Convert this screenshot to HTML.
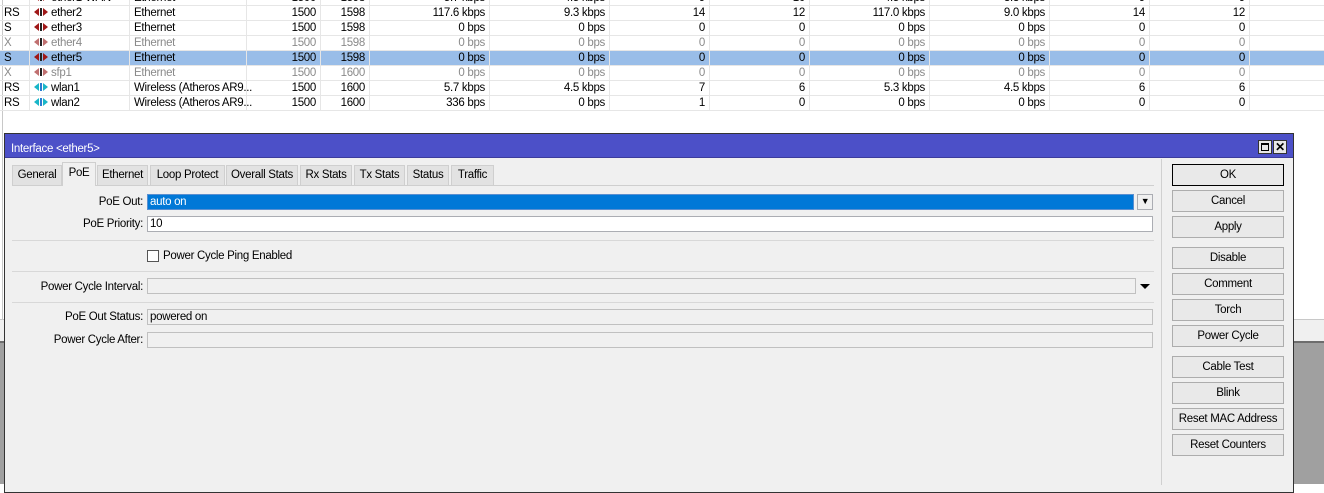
<!DOCTYPE html>
<html><head><meta charset="utf-8"><style>
*{box-sizing:border-box;margin:0;padding:0}
body{width:1324px;height:484px;position:relative;overflow:hidden;background:#fff;font-family:"Liberation Sans",Arial,sans-serif;font-size:11.5px;color:#000;letter-spacing:-0.3px}
.a{position:absolute}
.row{position:absolute;left:0;width:1324px;height:15px;border-bottom:1px solid #e6e6e6}
.row.sel{background:#99bde8}
.row.dis{color:#8a8a8a}
.c{position:absolute;top:0;height:15px;line-height:14px;white-space:nowrap;border-right:1px solid #e6e6e6}
.r{text-align:right;padding-right:4px}
.l{padding-left:4px}
.lab{position:absolute;right:1181px;text-align:right;width:200px;line-height:16px}
.fld{position:absolute;height:16px;border:1px solid #abadb3;background:#fff;line-height:14px;padding-left:2px}
.fld.g{background:#f0f0f0;border-color:#c0c0c0}
.sep{position:absolute;left:12px;width:1142px;height:1px;background:#d8d8d8}
.btn{position:absolute;left:1172px;width:112px;height:22px;border:1px solid #adadad;background:#e9e9e9;text-align:center;line-height:20px}
.tab{position:absolute;top:164px;height:20px;line-height:19px;border:1px solid #cfcfcf;border-bottom:none;background:#e2e2e2;text-align:center}
</style></head><body>
<div class="a" style="left:2px;top:0;width:1px;height:343px;background:#c8c8c8"></div>
<div id="t"></div>
<script>
var cols=[0,30,130,247,321,370,490,610,710,810,930,1050,1150,1250];
var rows=[
["","ether1-WAN","Ethernet","1500","1598","5.7 kbps","4.5 kbps","9","10","4.5 kbps","3.3 kbps","9","9",0],
["RS","ether2","Ethernet","1500","1598","117.6 kbps","9.3 kbps","14","12","117.0 kbps","9.0 kbps","14","12",0],
["S","ether3","Ethernet","1500","1598","0 bps","0 bps","0","0","0 bps","0 bps","0","0",0],
["X","ether4","Ethernet","1500","1598","0 bps","0 bps","0","0","0 bps","0 bps","0","0",2],
["S","ether5","Ethernet","1500","1598","0 bps","0 bps","0","0","0 bps","0 bps","0","0",1],
["X","sfp1","Ethernet","1500","1600","0 bps","0 bps","0","0","0 bps","0 bps","0","0",2],
["RS","wlan1","Wireless (Atheros AR9...","1500","1600","5.7 kbps","4.5 kbps","7","6","5.3 kbps","4.5 kbps","6","6",3],
["RS","wlan2","Wireless (Atheros AR9...","1500","1600","336 bps","0 bps","1","0","0 bps","0 bps","0","0",3]];
var h="";
rows.forEach(function(r,i){
 var y=-9+i*15;var fl=r[13];
 var cls="row"+(fl==1?" sel":"")+(fl==2?" dis":"");
 h+='<div class="'+cls+'" style="top:'+y+'px">';
 for(var k=0;k<13;k++){
  var x=cols[k],w=cols[k+1]-x;
  var al=(k<3)?"l":"r";
  var t=r[k];
  if(k==1){
   var wl=fl==3;
   var col=wl?"#19b6c8":(fl==2?"#c07070":"#a01818");
   t='<svg width="14" height="10" style="vertical-align:-1px;margin-right:3px" viewBox="0 0 14 10"><path d="M0 5L5 1V9Z M14 5L9 1V9Z" fill="'+col+'"/><rect x="6" y="1" width="2" height="8" fill="'+(wl?"#2a7ad0":"#222")+'"/></svg>'+t;
  }
  h+='<div class="c '+al+'" style="left:'+x+'px;width:'+w+'px">'+t+'</div>';
 }
 h+='</div>';
});
document.getElementById('t').innerHTML=h;
</script>
<div class="a" style="left:0;top:319px;width:1324px;height:1px;background:#c8c8c8"></div>
<div class="a" style="left:0;top:320px;width:1324px;height:21px;background:#f0f0f0"></div>
<div class="a" style="left:0;top:341px;width:1324px;height:2px;background:#6d6d6d"></div>
<div class="a" style="left:0;top:343px;width:1324px;height:141px;background:#a0a0a0"></div>
<div class="a" style="left:0;top:1px;width:1324px;height:484px">
<div class="a" style="left:4px;top:132px;width:1290px;height:360px;background:#f0f0f0;border:1px solid #333"></div>
<div class="a" style="left:5px;top:133px;width:1288px;height:24px;background:#4c50c8;border-bottom:1px solid #3c3c9c"></div>
<div class="a" style="left:11px;top:140px;color:#fff;line-height:16px">Interface &lt;ether5&gt;</div>
<div class="a" style="left:1258px;top:139px;width:14px;height:14px;background:#e8e8e8;border:1px solid #333"><div style="margin:2px;width:8px;height:8px;border:1px solid #000;border-top-width:2px"></div></div>
<div class="a" style="left:1273px;top:139px;width:14px;height:14px;background:#e8e8e8;border:1px solid #333;font-weight:bold;font-size:12px;line-height:12px;text-align:center">✕</div>
<div class="a" style="left:1161px;top:158px;width:1px;height:326px;background:#d0d0d0"></div>
<div class="a" style="left:12px;top:184px;width:1142px;height:1px;background:#cfcfcf"></div>
<div class="tab" style="left:12px;width:50px">General</div>
<div class="tab" style="left:62px;top:161px;height:24px;width:34px;background:#f0f0f0;line-height:21px">PoE</div>
<div class="tab" style="left:97px;width:51px">Ethernet</div>
<div class="tab" style="left:150px;width:75px">Loop Protect</div>
<div class="tab" style="left:226px;width:72px">Overall Stats</div>
<div class="tab" style="left:300px;width:52px">Rx Stats</div>
<div class="tab" style="left:354px;width:51px">Tx Stats</div>
<div class="tab" style="left:407px;width:42px">Status</div>
<div class="tab" style="left:451px;width:43px">Traffic</div>
<div class="lab" style="top:193px">PoE Out:</div>
<div class="fld" style="left:147px;top:193px;width:987px;background:#0078d7;border-color:#5a8fd0;color:#fff">auto on</div>
<div class="fld" style="left:1137px;top:193px;width:16px;background:#f0f0f0;font-size:9px;text-align:center;padding:0;line-height:13px">▼</div>
<div class="lab" style="top:215px">PoE Priority:</div>
<div class="fld" style="left:147px;top:215px;width:1006px">10</div>
<div class="sep" style="top:239px"></div>
<div class="a" style="left:147px;top:249px;width:12px;height:12px;border:1px solid #555;background:#fff"></div>
<div class="a" style="left:163px;top:247px;line-height:16px">Power Cycle Ping Enabled</div>
<div class="sep" style="top:270px"></div>
<div class="lab" style="top:278px">Power Cycle Interval:</div>
<div class="fld g" style="left:147px;top:277px;width:989px"></div>
<div class="a" style="left:1140px;top:283px;width:0;height:0;border-left:5px solid transparent;border-right:5px solid transparent;border-top:5px solid #000"></div>
<div class="sep" style="top:301px"></div>
<div class="lab" style="top:308px">PoE Out Status:</div>
<div class="fld g" style="left:147px;top:308px;width:1006px">powered on</div>
<div class="lab" style="top:331px">Power Cycle After:</div>
<div class="fld g" style="left:147px;top:331px;width:1006px"></div>
<div class="btn" style="top:163px;border:1px solid #000">OK</div>
<div class="btn" style="top:189px">Cancel</div>
<div class="btn" style="top:215px">Apply</div>
<div class="btn" style="top:246px">Disable</div>
<div class="btn" style="top:272px">Comment</div>
<div class="btn" style="top:298px">Torch</div>
<div class="btn" style="top:324px">Power Cycle</div>
<div class="btn" style="top:355px">Cable Test</div>
<div class="btn" style="top:381px">Blink</div>
<div class="btn" style="top:407px">Reset MAC Address</div>
<div class="btn" style="top:433px">Reset Counters</div>
</div>
</body></html>
